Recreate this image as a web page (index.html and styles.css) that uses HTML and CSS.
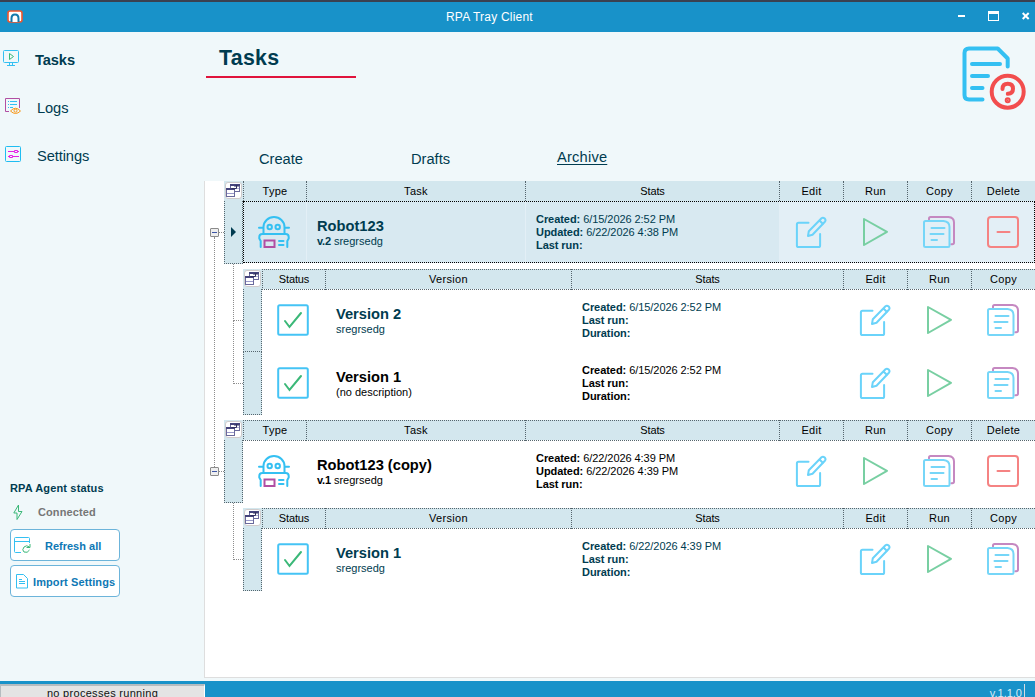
FILE: index.html
```html
<!DOCTYPE html>
<html lang="en">
  <head>
    <meta charset="UTF-8" />
    <meta name="viewport" content="width=device-width, initial-scale=1.0" />
    <title>RPA Tray Client</title>
    <link rel="stylesheet" href="styles.css">
  </head>
  <body>
    <!-- icons used by the grid rows -->
    <svg class="sprite">
      <symbol id="corner" viewBox="0 0 17 17">
        <rect x=".5" y=".5" width="16" height="16" rx="2.5" fill="#fff" stroke="#d0cccc" />
        <g fill="#fff" stroke="#6a6a9c">
          <rect x="5.5" y="2.5" width="9" height="7" />
          <path d="M5 3h10" stroke="#45457d" stroke-width="2" />
          <path d="M9 6.500h5" stroke="#b4b4da" />
          <rect x="1.500" y="6.500" width="8" height="8" />
          <path d="M1 7h9" stroke="#45457d" stroke-width="2" />
          <path d="M2 11.500h7" stroke="#9a9acb" />
          <path d="M6.500 6.500h5v-3M9.500 5l2-2 2 2" stroke="#30305f" fill="none" />
        </g>
      </symbol>
      <symbol id="robot" viewBox="0 0 32 32">
        <g fill="none" stroke="#34c0f2" stroke-width="2" stroke-linecap="round">
          <path d="M5.500 17.500v-6.500a10.500 10 0 0 1 21 0v6.500M1 11.700h4M27 11.700h4" />
          <path d="M2.700 31v-6l-1.400-2.500V21q0-3 3-3h23.400q3 0 3 3v1.500L29.300 25v6" />
          <circle cx="11.700" cy="11" r="2.200" />
          <circle cx="19.700" cy="11" r="2.200" />
          <path d="M21 25h4.500M21 29h4.500" />
        </g>
        <rect x="6.500" y="24.500" width="10" height="6.500" fill="none" stroke="#b14fa3" stroke-width="2" />
      </symbol>
      <symbol id="check" viewBox="0 0 32 32">
        <rect x="1.200" y="1.200" width="29.600" height="29.600" rx="1.500" fill="#fff" stroke="#45c4f5" stroke-width="2" />
        <path d="M8 17l4.500 6L24 9" fill="none" stroke="#3bb878" stroke-width="2" stroke-linecap="round" />
      </symbol>
      <symbol id="edit" viewBox="0 0 32 32">
        <g fill="none" stroke="#6ad3fa" stroke-width="2" stroke-linecap="round" stroke-linejoin="round">
          <path d="M13.500 6.800H3.500q-1.600 0-1.600 1.600v21q0 1.600 1.600 1.600h20q1.600 0 1.600-1.600V18" />
          <path d="M13 20l.8-4.800L26.500 2.200q1.500-1.200 3.200.3 1.500 1.600.2 3.200L17.500 18.800zM24.500 4.500l3.500 3.500" />
        </g>
      </symbol>
      <symbol id="run" viewBox="0 0 32 32">
        <path d="M5 3l23 12.800L5 29z" fill="none" stroke="#78cfa2" stroke-width="2" stroke-linejoin="round" />
      </symbol>
      <symbol id="copy" viewBox="0 0 32 32">
        <g fill="none" stroke-width="2" stroke-linecap="round" stroke-linejoin="round">
          <path d="M6 3.500V2.500Q6 1 7.500 1h18q5.500.5 5.500 5.500v20q0 1.700-1.700 1.700h-1" stroke="#c588c1" />
          <path d="M2.500 5h18q6 .5 6 6v18.500q0 1.500-1.500 1.500H2.500Q1 31 1 29.500v-23Q1 5 2.500 5z" stroke="#76d6f8" />
          <path d="M8.500 12h13M7.500 18h13M8.500 24h5.500" stroke="#76d6f8" />
        </g>
      </symbol>
      <symbol id="delete" viewBox="0 0 32 32">
        <rect x="1" y="1" width="30" height="30" rx="3" fill="none" stroke="#f58383" stroke-width="2" />
        <path d="M10.500 16h12" stroke="#f58383" stroke-width="2" stroke-linecap="round" />
      </symbol>
    </svg>

    <header class="titlebar">
      <svg class="app-icon" width="17" height="13" viewBox="0 0 17 13">
        <rect x="1" y="1" width="14" height="11" rx="2" fill="#fff" stroke="#f0562d" stroke-width="1.600" />
        <path d="M4.500 12V8.500q0-4 3.500-4t3.500 4V12" fill="#fff" stroke="#1279ab" stroke-width="2" />
      </svg>
      <span class="title">RPA Tray Client</span>
      <div class="window-buttons">
        <svg width="8" height="12" viewBox="0 0 8 12"><path d="M0 6h7" stroke="#fff" stroke-width="2" /></svg>
        <svg width="12" height="12" viewBox="0 0 12 12"><rect x=".5" y="1.500" width="10" height="9" fill="none" stroke="#fff" /><path d="M0 2.500h11" stroke="#fff" stroke-width="3" /></svg>
        <svg width="8" height="12" viewBox="0 0 8 12"><path d="M.7 3l6 6M6.700 3l-6 6" stroke="#fff" stroke-width="2" /></svg>
      </div>
    </header>

    <div class="content">
      <aside class="sidebar">
        <nav class="menu">
          <a class="menu-item active">
            <svg width="16" height="16" viewBox="0 0 16 16" fill="none" stroke="#34c0f2"><rect x=".5" y=".5" width="15" height="12" rx="1" /><path d="M6.500 13v2M9.500 13v2M4 15.500h8" /><path d="M6.500 3.500l4 3-4 3z" stroke="#3bb878" /></svg>
            <span>Tasks</span>
          </a>
          <a class="menu-item">
            <svg width="16" height="16" viewBox="0 0 16 16" fill="none"><path d="M4 13.500H.5V.5h14V10" stroke="#b14fa3" /><path d="M3 3.500h1M5 3.500h7M3 6.500h1M5 6.500h7M3 9.500h1M5 9.500h3" stroke="#34c0f2" /><path d="M5.500 13q5-5.500 10 0-5 5-10 0z" stroke="#f7991c" /><circle cx="10.500" cy="12.700" r="1.500" stroke="#f7991c" /></svg>
            <span>Logs</span>
          </a>
          <a class="menu-item">
            <svg width="16" height="16" viewBox="0 0 16 16" fill="none"><rect x=".5" y=".5" width="15" height="15" rx="1" stroke="#1fbdf2" /><path d="M3 5.500h6M12 5.500h2M3 10.500h1M8 10.500h6M9.500 4.500h3v2h-3zM4.500 9.500h3v2h-3z" stroke="#e61ee6" /></svg>
            <span>Settings</span>
          </a>
        </nav>
        <div class="agent">
          <h2>RPA Agent status</h2>
          <p class="connected">
            <svg width="10" height="17" viewBox="0 0 10 17"><path d="M5.500 1L.8 9H4v6.500L9 7.500H5.500z" fill="none" stroke="#3bb878" /></svg>
            <span>Connected</span>
          </p>
          <button class="refresh">
            <svg width="18" height="18" viewBox="0 0 18 18" fill="none"><path d="M7 16.500H1.500q-1 0-1-1v-13q0-1 1-1h13q1 0 1 1V7M.5 5.500h15" stroke="#34c0f2" /><path d="M15.500 11q-3-2.500-5.500 0-2.500 3 0 5 3.500 1.500 5.500-2M16 8v3.500h-3.500" stroke="#3bb878" /></svg>
            <span>Refresh all</span>
          </button>
          <button class="import">
            <svg width="12" height="15" viewBox="0 0 12 15" fill="none" stroke="#34c0f2"><path d="M.5.5h7l4 4v9.500H.5zM3 5.500h3M3 7.500h6M3 9.500h6" /></svg>
            <span>Import Settings</span>
          </button>
        </div>
      </aside>

      <main>
        <div class="page-head">
          <h1>Tasks</h1>
          <svg class="help" width="64" height="64" viewBox="0 0 64 64" fill="none" stroke-linecap="round" stroke-linejoin="round" stroke-width="4">
            <path d="M20.500 53.500H7q-4.500 0-4.500-4.500V7q0-4.500 4.500-4.500h28.700l10 10v8M10 18h28M10 30h16M10 42h10.500" stroke="#34c0f2" />
            <circle cx="45.700" cy="45.700" r="16" stroke="#f24d4d" />
            <path d="M40.500 43q0-5.200 5.300-5.200 5.200 0 5.200 5 0 4.700-5.200 5" stroke="#f24d4d" />
            <circle cx="45.700" cy="54.300" r="1" fill="#f24d4d" stroke="#f24d4d" />
          </svg>
        </div>
        <div class="tabs">
          <a>Create</a>
          <a>Drafts</a>
          <a class="current">Archive</a>
        </div>

        <section class="tree">
          <div class="band">
            <div class="grid-head task-cols">
              <svg class="corner"><use href="#corner" /></svg>
              <span>Type</span><span>Task</span><span class="tight">Stats</span><span>Edit</span><span>Run</span><span>Copy</span><span>Delete</span>
            </div>
            <div class="grid-row task-cols selected">
              <div class="indicator"><i class="arrow"></i></div>
              <div class="icon"><svg><use href="#robot" /></svg></div>
              <div class="name"><h3>Robot123</h3><p><b>v.2</b> sregrsedg</p></div>
              <div class="stats"><p><b>Created:</b> 6/15/2026 2:52 PM</p><p><b>Updated:</b> 6/22/2026 4:38 PM</p><p><b>Last run:</b></p></div>
              <div class="icon action"><svg><use href="#edit" /></svg></div>
              <div class="icon action"><svg><use href="#run" /></svg></div>
              <div class="icon action"><svg><use href="#copy" /></svg></div>
              <div class="icon action"><svg><use href="#delete" /></svg></div>
            </div>
            <div class="sub-band">
              <div class="grid-head version-cols">
                <svg class="corner"><use href="#corner" /></svg>
                <span class="tight">Status</span><span>Version</span><span class="tight">Stats</span><span>Edit</span><span>Run</span><span>Copy</span>
              </div>
              <div class="grid-row version-cols fresh">
                <div class="indicator"></div>
                <div class="icon"><svg><use href="#check" /></svg></div>
                <div class="name"><h3>Version 2</h3><p>sregrsedg</p></div>
                <div class="stats"><p><b>Created:</b> 6/15/2026 2:52 PM</p><p><b>Last run:</b></p><p><b>Duration:</b></p></div>
                <div class="icon"><svg><use href="#edit" /></svg></div>
                <div class="icon"><svg><use href="#run" /></svg></div>
                <div class="icon"><svg><use href="#copy" /></svg></div>
              </div>
              <div class="grid-row version-cols">
                <div class="indicator"></div>
                <div class="icon"><svg><use href="#check" /></svg></div>
                <div class="name"><h3>Version 1</h3><p>(no description)</p></div>
                <div class="stats"><p><b>Created:</b> 6/15/2026 2:52 PM</p><p><b>Last run:</b></p><p><b>Duration:</b></p></div>
                <div class="icon"><svg><use href="#edit" /></svg></div>
                <div class="icon"><svg><use href="#run" /></svg></div>
                <div class="icon"><svg><use href="#copy" /></svg></div>
              </div>
            </div>
          </div>

          <div class="band">
            <div class="grid-head task-cols">
              <svg class="corner"><use href="#corner" /></svg>
              <span>Type</span><span>Task</span><span class="tight">Stats</span><span>Edit</span><span>Run</span><span>Copy</span><span>Delete</span>
            </div>
            <div class="grid-row task-cols">
              <div class="indicator"></div>
              <div class="icon"><svg><use href="#robot" /></svg></div>
              <div class="name"><h3>Robot123 (copy)</h3><p><b>v.1</b> sregrsedg</p></div>
              <div class="stats"><p><b>Created:</b> 6/22/2026 4:39 PM</p><p><b>Updated:</b> 6/22/2026 4:39 PM</p><p><b>Last run:</b></p></div>
              <div class="icon"><svg><use href="#edit" /></svg></div>
              <div class="icon"><svg><use href="#run" /></svg></div>
              <div class="icon"><svg><use href="#copy" /></svg></div>
              <div class="icon"><svg><use href="#delete" /></svg></div>
            </div>
            <div class="sub-band">
              <div class="grid-head version-cols">
                <svg class="corner"><use href="#corner" /></svg>
                <span class="tight">Status</span><span>Version</span><span class="tight">Stats</span><span>Edit</span><span>Run</span><span>Copy</span>
              </div>
              <div class="grid-row version-cols fresh">
                <div class="indicator"></div>
                <div class="icon"><svg><use href="#check" /></svg></div>
                <div class="name"><h3>Version 1</h3><p>sregrsedg</p></div>
                <div class="stats"><p><b>Created:</b> 6/22/2026 4:39 PM</p><p><b>Last run:</b></p><p><b>Duration:</b></p></div>
                <div class="icon"><svg><use href="#edit" /></svg></div>
                <div class="icon"><svg><use href="#run" /></svg></div>
                <div class="icon"><svg><use href="#copy" /></svg></div>
              </div>
            </div>
          </div>
        </section>
      </main>
    </div>

    <footer>
      <div class="process">no processes running</div>
      <div class="version">v.1.1.0</div>
    </footer>
  </body>
</html>
```
FILE: styles.css
```css
*,
*::before,
*::after {
  box-sizing: border-box;
}

body {
  margin: 0;
  height: 697px;
  overflow: hidden;
  display: flex;
  flex-direction: column;
  background-color: #f0f8fa;
  color: #003c50;
  font-family: "Liberation Sans", Arial, sans-serif;
  font-size: 11px;
}

h1, h2, h3, p {
  margin: 0;
}

svg {
  display: block;
  flex: none;
}

.sprite {
  display: none;
}

/* title bar */
.titlebar {
  height: 32px;
  flex: none;
  display: flex;
  align-items: center;
  border-top: 2px solid #3a4150;
  background-color: #1892c9;
  color: #fff;
  font-size: 12px;
}

.app-icon {
  margin: 0 0 1px 7px;
}

.title {
  margin-left: 422px;
  letter-spacing: 0.2px;
}

.window-buttons {
  display: flex;
  gap: 22px;
  margin: 0 5px 2px auto;
}

.content {
  display: flex;
  height: 649px;
  flex: none;
}

/* sidebar */
.sidebar {
  width: 204px;
  flex: none;
  display: flex;
  flex-direction: column;
  justify-content: space-between;
  padding-bottom: 84px;
}

.menu {
  padding-top: 4px;
}

.menu-item {
  display: flex;
  align-items: center;
  gap: 16px;
  height: 48px;
  padding: 0 0 0 5px;
  font-size: 14.67px;
  letter-spacing: -0.1px;
}

.menu-item svg {
  margin-bottom: 4px;
}

.active {
  padding-left: 3px;
  font-weight: bold;
}

.agent {
  display: flex;
  flex-direction: column;
  align-items: flex-start;
  padding-left: 10px;
}

.agent h2 {
  font-size: 11px;
  line-height: 14px;
  letter-spacing: 0.15px;
  margin-bottom: 9px;
}

.connected {
  display: flex;
  align-items: center;
  gap: 15px;
  padding-left: 3px;
  margin-bottom: 8px;
  color: #767676;
  font-weight: bold;
  letter-spacing: 0.1px;
}

.connected span {
  padding-bottom: 2px;
}

button {
  display: flex;
  align-items: center;
  width: 110px;
  height: 32px;
  border: 1px solid #6cb4da;
  border-radius: 4px;
  background-color: #fff;
  color: #0e78b5;
  font-family: inherit;
  font-size: 11px;
  font-weight: bold;
  white-space: nowrap;
}

button span {
  padding-top: 2px;
}

.refresh {
  padding: 0 0 0 3px;
  gap: 13px;
  margin-bottom: 4px;
}

.import {
  padding: 0 0 0 5px;
  gap: 5px;
  letter-spacing: 0.1px;
}

/* main part */
main {
  flex: 1;
  display: flex;
  flex-direction: column;
}

.page-head {
  display: flex;
  justify-content: space-between;
  height: 88px;
  padding: 14px 9px 0 2px;
}

h1 {
  width: 150px;
  height: 32px;
  padding-left: 13px;
  border-bottom: 2px solid #e0143c;
  font-size: 21.33px;
  line-height: 24px;
  letter-spacing: 0.3px;
}

.tabs {
  display: flex;
  height: 61px;
  padding: 29px 0 0 55px;
  font-size: 14.67px;
  line-height: 20px;
}

.tabs a {
  width: 152px;
}

.tabs .current {
  width: auto;
  margin: -2px 0 0 -6px;
  text-decoration: underline;
  text-underline-offset: 2px;
  letter-spacing: 0.2px;
}

/* task tree */
.tree {
  height: 497px;
  padding-left: 19px;
  border-left: 1px solid #dedede;
  border-bottom: 1px solid #dedede;
  background-color: #fff;
}

.band {
  position: relative;
  margin-bottom: 5px;
}

/* expander box on the trunk */
.band > .grid-row::before {
  content: "";
  position: absolute;
  left: -14px;
  top: 27px;
  width: 9px;
  height: 9px;
  border: 1px solid #8a8a8a;
  border-radius: 1px;
  background: linear-gradient(#3d55a5, #3d55a5) center / 5px 1px no-repeat #eee;
}

.band > .grid-row .indicator::before {
  content: "";
  position: absolute;
  left: -5px;
  top: 31px;
  width: 5px;
  border-top: 1px dotted #8d8d8d;
}

.band:first-child::before {
  content: "";
  position: absolute;
  left: -10px;
  top: 56px;
  height: 230px;
  border-left: 1px dotted #8d8d8d;
}

.grid-head,
.grid-row {
  position: relative;
  display: grid;
}

.task-cols {
  grid-template-columns: 19px 63px 219px 254px repeat(4, 64px);
}

.version-cols {
  grid-template-columns: 19px 63px 246px 272px repeat(3, 64px);
}

.grid-head {
  height: 20px;
  background-color: #d3e7ee;
  color: #000;
}

.grid-head span {
  border: 1px dotted #55656d;
  border-right: 0;
  text-align: center;
  line-height: 19px;
  letter-spacing: 0.3px;
}

.grid-head .tight {
  letter-spacing: -0.15px;
}

.band:first-child > .grid-head span {
  border-top: 0;
  border-bottom: 0;
  line-height: 20px;
}

.corner {
  width: 17px;
  height: 17px;
  margin: 1px;
}

.grid-row {
  height: 63px;
  color: #000;
}

.selected,
.fresh {
  color: #003c50;
}

.indicator {
  display: flex;
  align-items: center;
  justify-content: center;
  border: 1px dotted #55656d;
  border-top: 0;
  background-color: #d3e7ee;
}

.arrow {
  border: 5px solid transparent;
  border-left-color: #003c50;
  border-right: 0;
}

.icon {
  display: flex;
  align-items: center;
  justify-content: center;
  padding: 0 0 1px;
}

.indicator + .icon {
  padding-right: 1px;
}

.icon svg {
  width: 32px;
  height: 32px;
}

.name {
  padding: 17px 0 0 11px;
}

.name h3 {
  font-size: 14.67px;
  line-height: 17px;
}

.name p {
  line-height: 13px;
}

.name b {
  letter-spacing: -0.2px;
}

.stats {
  padding: 12px 0 0 11px;
  line-height: 13px;
  letter-spacing: -0.06px;
}

/* focused row */
.selected > div:not(.indicator) {
  margin-bottom: 1px;
  padding-bottom: 0;
  background-color: #d8e9f1;
}

.selected > .name,
.selected > .stats {
  box-shadow: inset 1px 0 #e3eff6;
}

.selected > .icon.action {
  background-color: #e3eff6;
}

.selected::after {
  content: "";
  position: absolute;
  inset: 0 0 0 19px;
  height: 62px;
  border: 1px dotted #000;
}

.sub-band {
  padding: 5px 0 0 19px;
  position: relative;
}

/* branches leading to the versions */
.sub-band .grid-row::before {
  content: "";
  position: absolute;
  left: -10px;
  bottom: 31px;
  width: 10px;
  height: 63px;
  border-left: 1px dotted #8d8d8d;
  border-bottom: 1px dotted #8d8d8d;
}

.sub-band .fresh::before {
  height: 57px;
}

/* bottom bar */
footer {
  display: flex;
  justify-content: space-between;
  height: 16px;
  padding-top: 3px;
  flex: none;
  overflow: hidden;
  background-color: #1892c9;
}

.process {
  width: 205px;
  height: 20px;
  border: 2px solid #b5bcc0;
  border-left-width: 1px;
  border-right: 1px solid #fff;
  background-color: #e4e4e4;
  color: #111;
  text-align: center;
  line-height: 15px;
  letter-spacing: 0.3px;
}

.version {
  height: 20px;
  margin-right: 10px;
  padding: 3px 2px 0 0;
  border-right: 1px solid #d5dde2;
  color: #d8edf7;
}
```
